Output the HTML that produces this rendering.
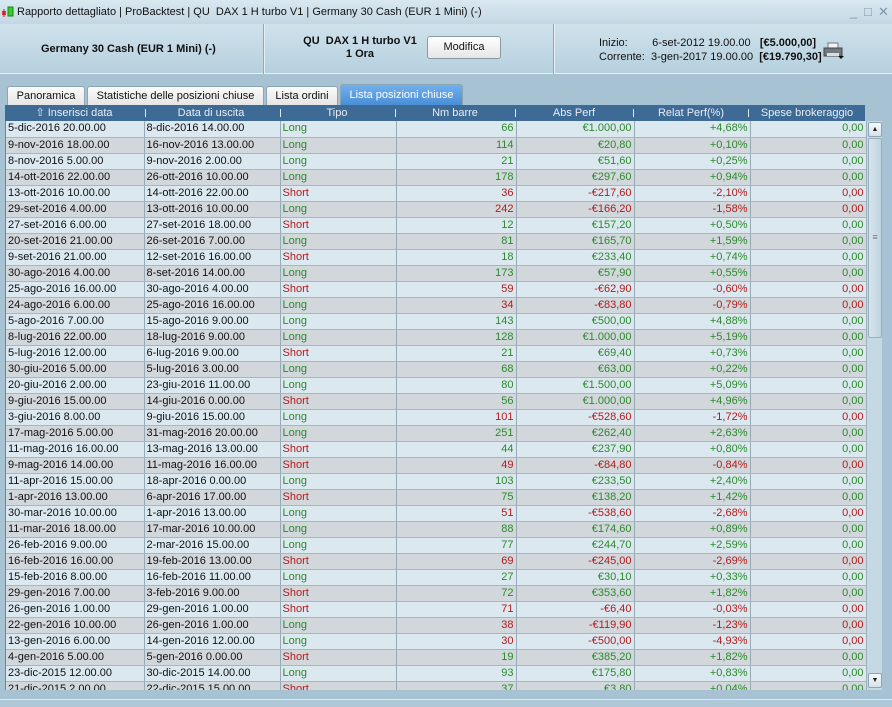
<!DOCTYPE html>
<html><head><meta charset="utf-8"><style>
*{box-sizing:border-box;margin:0;padding:0}
body{width:892px;height:707px;overflow:hidden;background:#a7c2d2;font-family:"Liberation Sans",Arial,sans-serif;font-size:11px;color:#111;position:relative}
.title{position:absolute;left:0;top:0;width:892px;height:24px;background:linear-gradient(#d9e8f0,#c3d7e3);font-size:11px;line-height:24px;padding-left:17px;color:#111}
.title .ic{position:absolute;left:2px;top:6px;width:12px;height:12px}
.winbtn{position:absolute;top:4px;color:#7e98a8;font-size:13px;line-height:16px}
.hdr{position:absolute;left:0;top:24px;width:892px;height:50px;background:linear-gradient(#cfe2ec,#b6d0de);border-bottom:1px solid #e8f1f6}
.sep{position:absolute;top:0;width:2px;height:50px;border-left:1px solid #8ea9b9;border-right:1px solid #e4eef4}
.b{font-weight:bold;font-size:11px}
.btn{position:absolute;left:427px;top:36px;width:74px;height:23px;border:1px solid #8a9aa5;border-radius:3px;background:linear-gradient(#fff,#e6e6e6);text-align:center;line-height:21px;font-size:11px}
.tab{position:absolute;top:86px;height:19px;background:linear-gradient(#fbfbfb,#e5e5e5);border:1px solid #8da4b3;border-bottom:none;border-radius:3px 3px 0 0;text-align:center;line-height:18px;font-size:11px}
.tab.act{background:linear-gradient(#6fb0ee,#4a8ed6);color:#fff;top:84px;height:21px;line-height:21px}
.th{position:absolute;left:5px;top:105px;width:860px;height:16px;background:#3e6a96;color:#e8eef4;font-size:11px;line-height:16px}
.th span{position:absolute;top:0;text-align:center}
.th i{position:absolute;top:4px;width:1px;height:8px;background:#dde6ee}
.grid{position:absolute;left:5px;top:121px;width:861px;height:569px;overflow:hidden;border-left:1px solid #6a8799}
table{border-collapse:collapse;table-layout:fixed;width:860px}
td{height:16px;border-right:1px solid #97a9b5;border-bottom:1px solid #a8b6bf;padding:0 2px;white-space:nowrap;overflow:hidden;line-height:15px;font-size:11px}
tr:nth-child(odd) td{background:#dce8f0}
tr:nth-child(even) td{background:#d2d7db}
td.r{text-align:right}
.g{color:#2b8a2b}.d{color:#b01c1c}
.sb{position:absolute;left:866px;top:121px;width:16px;height:569px;background:#c5d8e3;border-left:1px solid #9bb0bd}
.sbb{position:absolute;left:1px;width:14px;height:15px;background:linear-gradient(#f6f9fb,#d5e2ea);border:1px solid #8ea5b3;border-radius:2px;font-size:7px;text-align:center;line-height:13px;color:#222}
.bot{position:absolute;left:0;top:699px;width:892px;height:8px;border-top:1px solid #dbe8ef;background:#aec8d7}
</style></head><body>
<div class="title"><svg class="ic" viewBox="0 0 12 12"><rect x="0" y="5" width="4" height="4" fill="#e33"/><line x1="2" y1="3" x2="2" y2="11" stroke="#a22"/><rect x="6" y="1" width="5" height="9" fill="#3c3" stroke="#181"/></svg>Rapporto dettagliato | ProBacktest | QU&nbsp; DAX 1 H turbo V1 | Germany 30 Cash (EUR 1 Mini) (-)
<span class="winbtn" style="left:850px">_</span><span class="winbtn" style="left:864px">□</span><span class="winbtn" style="left:878px">✕</span></div>
<div class="hdr">
<div class="b" style="position:absolute;left:41px;top:19px">Germany 30 Cash (EUR 1 Mini) (-)</div>
<div class="sep" style="left:263px"></div>
<div class="b" style="position:absolute;left:300px;top:11px;width:120px;text-align:center;line-height:13px">QU&nbsp; DAX 1 H turbo V1<br>1 Ora</div>
<div class="btn" style="top:12px">Modifica</div>
<div class="sep" style="left:553px"></div>
<div style="position:absolute;left:599px;top:12px;line-height:14px;white-space:pre">Inizio:        6-set-2012 19.00.00   <b>[€5.000,00]</b>
Corrente:  3-gen-2017 19.00.00  <b>[€19.790,30]</b></div>
<svg style="position:absolute;left:823px;top:18px" width="22" height="18" viewBox="0 0 22 18"><rect x="5" y="1" width="10" height="6" fill="#f4f4f4" stroke="#777"/><rect x="1" y="6" width="18" height="8" fill="#6d7b85" stroke="#444"/><rect x="4" y="11" width="12" height="3" fill="#ddd"/><path d="M15 14l3 3 3-3z" fill="#111"/></svg>
</div>
<div class="tab" style="left:7px;width:78px">Panoramica</div>
<div class="tab" style="left:87px;width:177px">Statistiche delle posizioni chiuse</div>
<div class="tab" style="left:266px;width:72px">Lista ordini</div>
<div class="tab act" style="left:340px;width:123px">Lista posizioni chiuse</div>
<div class="th">
<span style="left:0;width:138px">⇧ Inserisci data</span><i style="left:140px"></i>
<span style="left:138px;width:136px">Data di uscita</span><i style="left:275px"></i>
<span style="left:274px;width:116px">Tipo</span><i style="left:390px"></i>
<span style="left:390px;width:120px">Nm barre</span><i style="left:510px"></i>
<span style="left:510px;width:118px">Abs Perf</span><i style="left:628px"></i>
<span style="left:628px;width:116px">Relat Perf(%)</span><i style="left:743px"></i>
<span style="left:744px;width:116px">Spese brokeraggio</span>
</div>
<div class="grid"><table>
<colgroup><col style="width:138px"><col style="width:136px"><col style="width:116px"><col style="width:120px"><col style="width:118px"><col style="width:116px"><col style="width:116px"></colgroup>
<tr><td>5-dic-2016 20.00.00</td><td>8-dic-2016 14.00.00</td><td class="g">Long</td><td class="r g">66</td><td class="r g">€1.000,00</td><td class="r g">+4,68%</td><td class="r g">0,00</td></tr>
<tr><td>9-nov-2016 18.00.00</td><td>16-nov-2016 13.00.00</td><td class="g">Long</td><td class="r g">114</td><td class="r g">€20,80</td><td class="r g">+0,10%</td><td class="r g">0,00</td></tr>
<tr><td>8-nov-2016 5.00.00</td><td>9-nov-2016 2.00.00</td><td class="g">Long</td><td class="r g">21</td><td class="r g">€51,60</td><td class="r g">+0,25%</td><td class="r g">0,00</td></tr>
<tr><td>14-ott-2016 22.00.00</td><td>26-ott-2016 10.00.00</td><td class="g">Long</td><td class="r g">178</td><td class="r g">€297,60</td><td class="r g">+0,94%</td><td class="r g">0,00</td></tr>
<tr><td>13-ott-2016 10.00.00</td><td>14-ott-2016 22.00.00</td><td class="d">Short</td><td class="r d">36</td><td class="r d">-€217,60</td><td class="r d">-2,10%</td><td class="r d">0,00</td></tr>
<tr><td>29-set-2016 4.00.00</td><td>13-ott-2016 10.00.00</td><td class="g">Long</td><td class="r d">242</td><td class="r d">-€166,20</td><td class="r d">-1,58%</td><td class="r d">0,00</td></tr>
<tr><td>27-set-2016 6.00.00</td><td>27-set-2016 18.00.00</td><td class="d">Short</td><td class="r g">12</td><td class="r g">€157,20</td><td class="r g">+0,50%</td><td class="r g">0,00</td></tr>
<tr><td>20-set-2016 21.00.00</td><td>26-set-2016 7.00.00</td><td class="g">Long</td><td class="r g">81</td><td class="r g">€165,70</td><td class="r g">+1,59%</td><td class="r g">0,00</td></tr>
<tr><td>9-set-2016 21.00.00</td><td>12-set-2016 16.00.00</td><td class="d">Short</td><td class="r g">18</td><td class="r g">€233,40</td><td class="r g">+0,74%</td><td class="r g">0,00</td></tr>
<tr><td>30-ago-2016 4.00.00</td><td>8-set-2016 14.00.00</td><td class="g">Long</td><td class="r g">173</td><td class="r g">€57,90</td><td class="r g">+0,55%</td><td class="r g">0,00</td></tr>
<tr><td>25-ago-2016 16.00.00</td><td>30-ago-2016 4.00.00</td><td class="d">Short</td><td class="r d">59</td><td class="r d">-€62,90</td><td class="r d">-0,60%</td><td class="r d">0,00</td></tr>
<tr><td>24-ago-2016 6.00.00</td><td>25-ago-2016 16.00.00</td><td class="g">Long</td><td class="r d">34</td><td class="r d">-€83,80</td><td class="r d">-0,79%</td><td class="r d">0,00</td></tr>
<tr><td>5-ago-2016 7.00.00</td><td>15-ago-2016 9.00.00</td><td class="g">Long</td><td class="r g">143</td><td class="r g">€500,00</td><td class="r g">+4,88%</td><td class="r g">0,00</td></tr>
<tr><td>8-lug-2016 22.00.00</td><td>18-lug-2016 9.00.00</td><td class="g">Long</td><td class="r g">128</td><td class="r g">€1.000,00</td><td class="r g">+5,19%</td><td class="r g">0,00</td></tr>
<tr><td>5-lug-2016 12.00.00</td><td>6-lug-2016 9.00.00</td><td class="d">Short</td><td class="r g">21</td><td class="r g">€69,40</td><td class="r g">+0,73%</td><td class="r g">0,00</td></tr>
<tr><td>30-giu-2016 5.00.00</td><td>5-lug-2016 3.00.00</td><td class="g">Long</td><td class="r g">68</td><td class="r g">€63,00</td><td class="r g">+0,22%</td><td class="r g">0,00</td></tr>
<tr><td>20-giu-2016 2.00.00</td><td>23-giu-2016 11.00.00</td><td class="g">Long</td><td class="r g">80</td><td class="r g">€1.500,00</td><td class="r g">+5,09%</td><td class="r g">0,00</td></tr>
<tr><td>9-giu-2016 15.00.00</td><td>14-giu-2016 0.00.00</td><td class="d">Short</td><td class="r g">56</td><td class="r g">€1.000,00</td><td class="r g">+4,96%</td><td class="r g">0,00</td></tr>
<tr><td>3-giu-2016 8.00.00</td><td>9-giu-2016 15.00.00</td><td class="g">Long</td><td class="r d">101</td><td class="r d">-€528,60</td><td class="r d">-1,72%</td><td class="r d">0,00</td></tr>
<tr><td>17-mag-2016 5.00.00</td><td>31-mag-2016 20.00.00</td><td class="g">Long</td><td class="r g">251</td><td class="r g">€262,40</td><td class="r g">+2,63%</td><td class="r g">0,00</td></tr>
<tr><td>11-mag-2016 16.00.00</td><td>13-mag-2016 13.00.00</td><td class="d">Short</td><td class="r g">44</td><td class="r g">€237,90</td><td class="r g">+0,80%</td><td class="r g">0,00</td></tr>
<tr><td>9-mag-2016 14.00.00</td><td>11-mag-2016 16.00.00</td><td class="d">Short</td><td class="r d">49</td><td class="r d">-€84,80</td><td class="r d">-0,84%</td><td class="r d">0,00</td></tr>
<tr><td>11-apr-2016 15.00.00</td><td>18-apr-2016 0.00.00</td><td class="g">Long</td><td class="r g">103</td><td class="r g">€233,50</td><td class="r g">+2,40%</td><td class="r g">0,00</td></tr>
<tr><td>1-apr-2016 13.00.00</td><td>6-apr-2016 17.00.00</td><td class="d">Short</td><td class="r g">75</td><td class="r g">€138,20</td><td class="r g">+1,42%</td><td class="r g">0,00</td></tr>
<tr><td>30-mar-2016 10.00.00</td><td>1-apr-2016 13.00.00</td><td class="g">Long</td><td class="r d">51</td><td class="r d">-€538,60</td><td class="r d">-2,68%</td><td class="r d">0,00</td></tr>
<tr><td>11-mar-2016 18.00.00</td><td>17-mar-2016 10.00.00</td><td class="g">Long</td><td class="r g">88</td><td class="r g">€174,60</td><td class="r g">+0,89%</td><td class="r g">0,00</td></tr>
<tr><td>26-feb-2016 9.00.00</td><td>2-mar-2016 15.00.00</td><td class="g">Long</td><td class="r g">77</td><td class="r g">€244,70</td><td class="r g">+2,59%</td><td class="r g">0,00</td></tr>
<tr><td>16-feb-2016 16.00.00</td><td>19-feb-2016 13.00.00</td><td class="d">Short</td><td class="r d">69</td><td class="r d">-€245,00</td><td class="r d">-2,69%</td><td class="r d">0,00</td></tr>
<tr><td>15-feb-2016 8.00.00</td><td>16-feb-2016 11.00.00</td><td class="g">Long</td><td class="r g">27</td><td class="r g">€30,10</td><td class="r g">+0,33%</td><td class="r g">0,00</td></tr>
<tr><td>29-gen-2016 7.00.00</td><td>3-feb-2016 9.00.00</td><td class="d">Short</td><td class="r g">72</td><td class="r g">€353,60</td><td class="r g">+1,82%</td><td class="r g">0,00</td></tr>
<tr><td>26-gen-2016 1.00.00</td><td>29-gen-2016 1.00.00</td><td class="d">Short</td><td class="r d">71</td><td class="r d">-€6,40</td><td class="r d">-0,03%</td><td class="r d">0,00</td></tr>
<tr><td>22-gen-2016 10.00.00</td><td>26-gen-2016 1.00.00</td><td class="g">Long</td><td class="r d">38</td><td class="r d">-€119,90</td><td class="r d">-1,23%</td><td class="r d">0,00</td></tr>
<tr><td>13-gen-2016 6.00.00</td><td>14-gen-2016 12.00.00</td><td class="g">Long</td><td class="r d">30</td><td class="r d">-€500,00</td><td class="r d">-4,93%</td><td class="r d">0,00</td></tr>
<tr><td>4-gen-2016 5.00.00</td><td>5-gen-2016 0.00.00</td><td class="d">Short</td><td class="r g">19</td><td class="r g">€385,20</td><td class="r g">+1,82%</td><td class="r g">0,00</td></tr>
<tr><td>23-dic-2015 12.00.00</td><td>30-dic-2015 14.00.00</td><td class="g">Long</td><td class="r g">93</td><td class="r g">€175,80</td><td class="r g">+0,83%</td><td class="r g">0,00</td></tr>
<tr><td>21-dic-2015 2.00.00</td><td>22-dic-2015 15.00.00</td><td class="d">Short</td><td class="r g">37</td><td class="r g">€3,80</td><td class="r g">+0,04%</td><td class="r g">0,00</td></tr>
</table></div>
<div class="sb">
<div class="sbb" style="top:1px">▲</div>
<div style="position:absolute;left:1px;top:17px;width:14px;height:200px;background:linear-gradient(90deg,#d6e5ee,#c0d4e0);border:1px solid #98aebc;border-radius:2px;text-align:center;line-height:196px;color:#778;font-size:9px">≡</div>
<div class="sbb" style="top:552px">▼</div>
</div>
<div class="bot"></div>
</body></html>
